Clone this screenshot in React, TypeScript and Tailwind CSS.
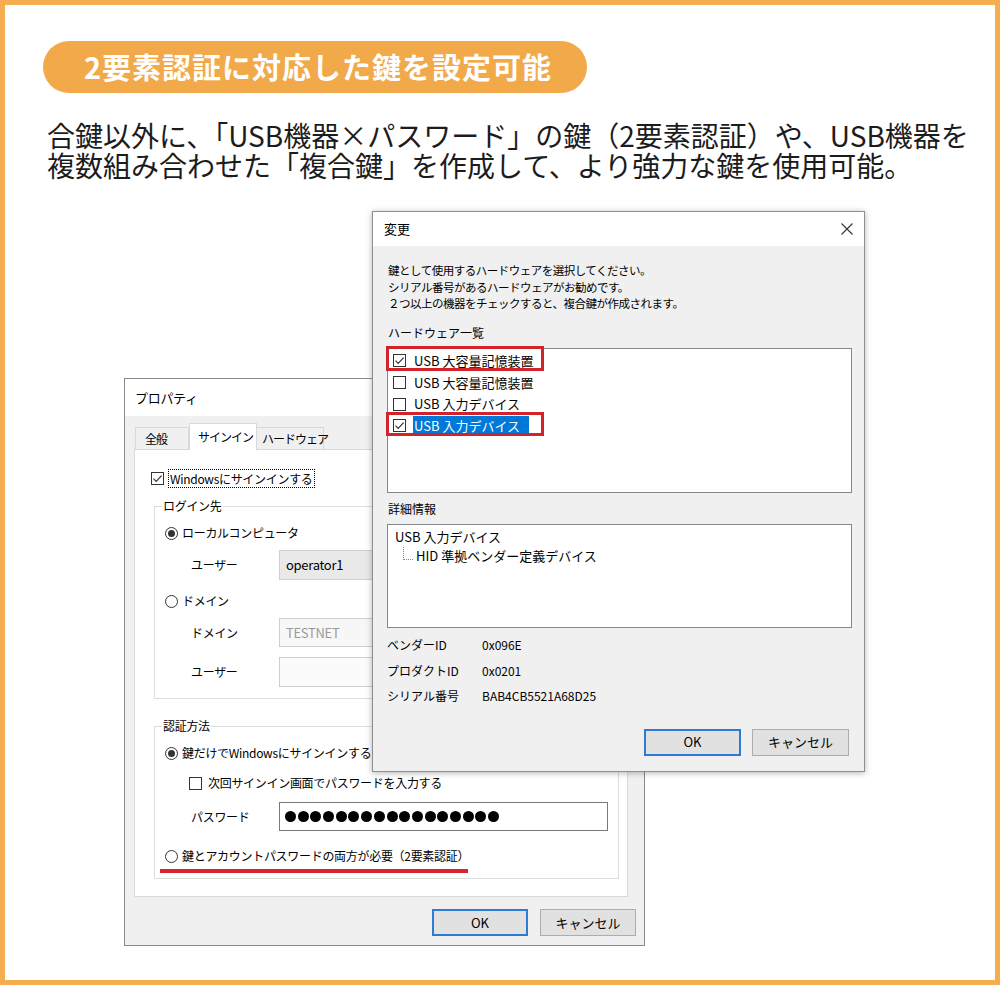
import React from 'react';

const CheckBox = ({ checked = false }: { checked?: boolean }) => (
    <span className="flex h-[13px] w-[13px] shrink-0 items-center justify-center border border-[#333] bg-white">
        {checked && (
            <svg width="11" height="11" viewBox="0 0 11 11" fill="none">
                <path d="M1.5 5.6 L4.2 8.3 L9.6 2.6" stroke="#333" strokeWidth="1.2" />
            </svg>
        )}
    </span>
);

const Radio = ({ checked = false }: { checked?: boolean }) => (
    <span className="flex h-[13px] w-[13px] shrink-0 items-center justify-center rounded-full border border-[#333] bg-white">
        {checked && <span className="h-[7px] w-[7px] rounded-full bg-[#333]" />}
    </span>
);

const WinButton = ({ label, primary = false, wide = false }: { label: string; primary?: boolean; wide?: boolean }) => (
    <div
        className={
            (wide ? "w-[97px] " : "w-[96px] ") +
            (primary
                ? "flex h-[27px] items-center justify-center border-2 border-[#2f7bd4] bg-[#e1e1e1] text-[13px]"
                : "flex h-[27px] items-center justify-center border border-[#adadad] bg-[#e1e1e1] text-[13px]")
        }
    >
        {label}
    </div>
);

const Group = ({ title, className, children }: { title: string; className: string; children: React.ReactNode }) => (
    <div className={"relative ml-[19px] w-[465px] border border-[#dcdcdc] " + className}>
        <span className="absolute -top-[10px] left-[7px] bg-white px-px leading-[18px]">{title}</span>
        {children}
    </div>
);

const Field = ({ label, value, tone }: { label: string; value?: string; tone: 'disabled' | 'gray' | 'blank' }) => (
    <div className="flex h-full items-center">
        <span className="w-[124px] pl-[36px]">{label}</span>
        <div
            className={
                tone === 'disabled'
                    ? "flex h-full w-[329px] items-center border border-[#cfcfcf] bg-[#e9e9e9] pl-[6px] text-[13px] text-black"
                    : tone === 'gray'
                        ? "flex h-full w-[329px] items-center border border-[#cfcfcf] bg-[#f7f7f7] pl-[6px] text-[13px] text-[#999]"
                        : "flex h-full w-[329px] items-center border border-[#cfcfcf] bg-[#fbfbfb] pl-[6px]"
            }
        >
            {value}
        </div>
    </div>
);

const PropertyDialog = () => (
    <div className="absolute left-[119px] top-[198px] flex h-[568px] w-[521px] flex-col border border-[#8a8a8a] bg-[#f0f0f0] text-[12px] tracking-[-0.3px] text-black">
        <div className="flex h-[37px] items-center bg-white pl-[10px] text-[13px]">プロパティ</div>

        <div className="mt-[7px] flex h-[26px] items-end whitespace-nowrap pl-[10px] tracking-[-1px]">
            <div className="flex h-[22px] w-[54px] items-center border border-b-0 border-[#d9d9d9] bg-[#f0f0f0] pl-[9px]">全般</div>
            <div className="relative z-10 -mb-px flex h-[27px] w-[68px] items-start border border-b-0 border-[#d9d9d9] bg-white pl-[8px] pt-[4px]">サインイン</div>
            <div className="flex h-[22px] w-[67px] items-center border border-b-0 border-l-0 border-[#d9d9d9] bg-[#f0f0f0] pl-[5px]">ハードウェア</div>
        </div>

        <div className="ml-[9px] h-[448px] w-[494px] border border-[#d9d9d9] bg-white pt-[16px]">
            <div className="flex h-[24px] items-center pl-[16px]">
                <CheckBox checked />
                <span className="ml-[4px] border border-dotted border-black px-px leading-[17px]">Windowsにサインインする</span>
            </div>

            <Group title="ログイン先" className="mt-[16px] h-[193px] pt-[14px]">
                <div className="flex h-[24px] items-center gap-[4px] pl-[10px]">
                    <Radio checked />
                    <span>ローカルコンピュータ</span>
                </div>
                <div className="mt-[5px] h-[30px]">
                    <Field label="ユーザー" value="operator1" tone="disabled" />
                </div>
                <div className="mt-[9px] flex h-[24px] items-center gap-[4px] pl-[10px]">
                    <Radio />
                    <span>ドメイン</span>
                </div>
                <div className="mt-[5px] h-[29px]">
                    <Field label="ドメイン" value="TESTNET" tone="gray" />
                </div>
                <div className="mt-[10px] h-[30px]">
                    <Field label="ユーザー" tone="blank" />
                </div>
            </Group>

            <Group title="認証方法" className="mt-[27px] h-[153px] pt-[14px]">
                <div className="flex h-[24px] items-center gap-[4px] pl-[10px]">
                    <Radio checked />
                    <span>鍵だけでWindowsにサインインする</span>
                </div>
                <div className="mt-[6px] flex h-[24px] items-center gap-[6px] pl-[34px]">
                    <CheckBox />
                    <span>次回サインイン画面でパスワードを入力する</span>
                </div>
                <div className="mt-[7px] flex h-[29px] items-center">
                    <span className="w-[124px] pl-[36px]">パスワード</span>
                    <div className="flex h-full w-[329px] items-center gap-[1.7px] border border-[#7a7a7a] bg-white pl-[5px]">
                        {Array.from({ length: 17 }).map((_, i) => (
                            <span key={i} className="h-[11px] w-[11px] rounded-full bg-black" />
                        ))}
                    </div>
                </div>
                <div className="relative mt-[13px] flex h-[24px] items-center gap-[4px] pl-[10px]">
                    <Radio />
                    <span>鍵とアカウントパスワードの両方が必要（2要素認証）</span>
                    <span className="absolute left-[5px] top-[25px] h-[4px] w-[308px] bg-[#d9232d]" />
                </div>
            </Group>
        </div>

        <div className="mt-[12px] flex justify-end gap-[12px] pr-[8px] tracking-normal">
            <WinButton label="OK" primary />
            <WinButton label="キャンセル" />
        </div>
    </div>
);

const ChangeDialog = () => (
    <div className="absolute left-[367px] top-[31px] z-10 flex h-[561px] w-[493px] flex-col border border-[#8f8f8f] bg-[#f0f0f0] text-[13px] text-black shadow-[0_1px_6px_rgba(0,0,0,0.3)]">
        <div className="flex h-[34px] items-center justify-between bg-white pl-[11px] pr-[11px]">
            <span>変更</span>
            <svg width="12" height="12" viewBox="0 0 12 12" fill="none">
                <path d="M0.5 0.5 L11.5 11.5 M11.5 0.5 L0.5 11.5" stroke="#333" strokeWidth="1.1" />
            </svg>
        </div>

        <div className="flex flex-col px-[14px]">
            <div className="pl-px pt-[16px] text-[11.5px] leading-[16.5px] tracking-[-0.5px]">
                <div>鍵として使用するハードウェアを選択してください。</div>
                <div>シリアル番号があるハードウェアがお勧めです。</div>
                <div>２つ以上の機器をチェックすると、複合鍵が作成されます。</div>
            </div>
            <div className="mt-[12px] pl-px text-[12px] leading-[17px]">ハードウェア一覧</div>

            <div className="relative mt-[7px] h-[145px] w-[465px] border border-[#828790] bg-white pt-px">
                <div className="flex h-[22px] items-center gap-[8px] pl-[5px]">
                    <CheckBox checked />
                    <span>USB 大容量記憶装置</span>
                </div>
                <div className="flex h-[22px] items-center gap-[8px] pl-[5px]">
                    <CheckBox />
                    <span>USB 大容量記憶装置</span>
                </div>
                <div className="flex h-[21px] items-center gap-[8px] pl-[5px]">
                    <CheckBox />
                    <span>USB 入力デバイス</span>
                </div>
                <div className="flex h-[22px] items-center gap-[7px] pl-[5px]">
                    <CheckBox checked />
                    <span className="h-[20px] bg-[#0078d7] pl-px pr-[9px] leading-[20px] text-white">USB 入力デバイス</span>
                </div>
                <span className="absolute -left-[2px] -top-[3px] h-[25px] w-[158px] border-[3px] border-[#d2232a]" />
                <span className="absolute -left-[2px] top-[63px] h-[24px] w-[158px] border-[3px] border-[#d2232a]" />
            </div>

            <div className="mt-[7px] pl-px text-[12px] leading-[17px]">詳細情報</div>

            <div className="mt-[7px] h-[104px] w-[465px] border border-[#828790] bg-white pl-[7px] pt-[3px]">
                <div className="flex h-[19px] items-center">USB 入力デバイス</div>
                <div className="flex h-[19px] items-center">
                    <span className="mb-[6px] ml-[8px] h-[13px] w-[10px] border-b border-l border-dotted border-[#888]" />
                    <span className="ml-[3px]">HID 準拠ベンダー定義デバイス</span>
                </div>
            </div>

            <div className="mt-[4px] text-[12px]">
                <div className="flex h-[26px] items-center">
                    <span className="w-[95px]">ベンダーID</span>
                    <span>0x096E</span>
                </div>
                <div className="flex h-[26px] items-center">
                    <span className="w-[95px]">プロダクトID</span>
                    <span>0x0201</span>
                </div>
                <div className="flex h-[25px] items-center">
                    <span className="w-[95px]">シリアル番号</span>
                    <span>BAB4CB5521A68D25</span>
                </div>
            </div>
        </div>

        <div className="mt-[20px] flex justify-end gap-[11px] pr-[15px]">
            <WinButton label="OK" primary wide />
            <WinButton label="キャンセル" wide />
        </div>
    </div>
);

export default function App() {
    return (
        <div className="flex h-[985px] w-[1000px] flex-col border-[5px] border-[#f4ae4f] bg-white font-['Noto_Sans_CJK_JP',sans-serif]">
            <div className="flex flex-col pl-[38px] pt-[36px]">
                <div className="flex h-[52px] items-center self-start rounded-full bg-[#f2a94a] pl-[41px] pr-[35px] text-[29px] font-bold tracking-[1px] text-white">
                    2要素認証に対応した鍵を設定可能
                </div>
                <p className="ml-[4px] mt-[27px] text-[28px] leading-[30px] text-[#1c1c1c]">
                    合鍵以外に、「USB機器×パスワード」の鍵（2要素認証）や、USB機器を
                    <br />
                    複数組み合わせた「複合鍵」を作成して、より強力な鍵を使用可能。
                </p>
            </div>

            <div className="relative flex-1">
                <PropertyDialog />
                <ChangeDialog />
            </div>
        </div>
    );
}
